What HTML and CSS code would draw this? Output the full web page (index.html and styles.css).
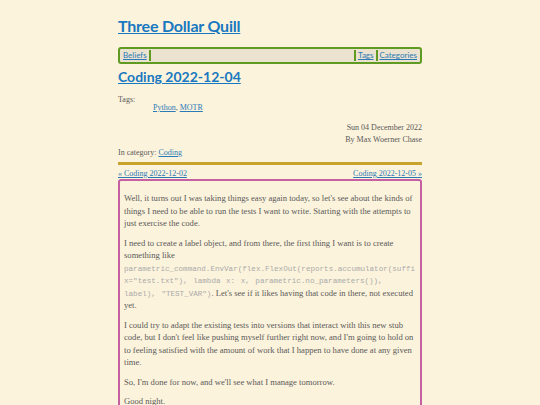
FILE: index.html
```html
<!DOCTYPE html>
<html lang="en">
<head>
    <meta charset="UTF-8">
    <meta name="viewport" content="width=device-width, initial-scale=1.0">
    <title>Coding 2022-12-04 - Three Dollar Quill</title>
    <link rel="stylesheet" href="styles.css">
</head>
<body>
    <div class="page">
        <header>
            <h1 class="site-title"><a href="#">Three Dollar Quill</a></h1>
            <nav class="menu">
                <a href="#">Beliefs</a>
                <span class="spacer"></span>
                <a href="#">Tags</a>
                <a href="#">Categories</a>
            </nav>
        </header>

        <article>
            <h2 class="post-title"><a href="#">Coding 2022-12-04</a></h2>

            <div class="tags">
                <div>Tags:</div>
                <div class="tag-list"><a href="#">Python</a>, <a href="#">MOTR</a></div>
            </div>

            <div class="byline">
                <div>Sun 04 December 2022</div>
                <div>By Max Woerner Chase</div>
            </div>

            <div class="category">In category: <a href="#">Coding</a></div>

            <div class="pager">
                <a href="#">&laquo; Coding 2022-12-02</a>
                <a href="#">Coding 2022-12-05 &raquo;</a>
            </div>

            <div class="entry">
                <p>Well, it turns out I was taking things easy again today, so let's see about the kinds of things I need to be able to run the tests I want to write. Starting with the attempts to just exercise the code.</p>
                <p>I need to create a label object, and from there, the first thing I want is to create something like <code>parametric_command.EnvVar(flex.FlexOut(reports.accumulator(suffix="test.txt"), lambda x: x, parametric.no_parameters()), label), "TEST_VAR")</code>. Let's see if it likes having that code in there, not executed yet.</p>
                <p>I could try to adapt the existing tests into versions that interact with this new stub code, but I don't feel like pushing myself further right now, and I'm going to hold on to feeling satisfied with the amount of work that I happen to have done at any given time.</p>
                <p>So, I'm done for now, and we'll see what I manage tomorrow.</p>
                <p>Good night.</p>
            </div>
        </article>
    </div>
</body>
</html>
```

FILE: styles.css
```css
body {
    margin: 0;
    background-color: #fcf3dc;
    color: #5a5a5a;
    font-family: 'Liberation Serif', serif;
    font-size: 8px;
}
a {
    color: #2a7ab8;
}
.page {
    width: 304px;
    margin: 0 auto;
    padding-top: 14px;
}
.site-title {
    font-family: 'Lato', 'Open Sans', sans-serif;
    font-size: 16px;
    letter-spacing: -0.2px;
    font-weight: bold;
    margin: 0 0 9px 0;
    line-height: 24px;
}
.site-title a {
    color: #1878c0;
}
.menu {
    display: flex;
    align-items: center;
    height: 11px;
    padding: 1px 1px;
    border: 2px solid #5f9a22;
    border-radius: 3px;
    background-color: #ebe3cf;
    font-family: 'Lato', 'Open Sans', sans-serif;
    font-size: 8px;
}
.menu a {
    padding: 0 2px;
    line-height: 11px;
}
.menu a:first-child {
    border-right: 2px solid #5f9a22;
}
.menu .spacer + a,
.menu a:last-child {
    border-left: 2px solid #5f9a22;
}
.spacer {
    flex: 1;
}
.post-title {
    font-family: 'Lato', 'Open Sans', sans-serif;
    font-size: 14px;
    font-weight: bold;
    margin: 4px 0 11px 0;
}
.post-title a {
    color: #1878c0;
}
.tags {
    line-height: 8px;
}
.tag-list {
    padding-left: 35px;
}
.byline {
    text-align: right;
    margin-top: 10px;
    line-height: 12px;
}
.category {
    margin-top: 1px;
    line-height: 12px;
}
.pager {
    display: flex;
    justify-content: space-between;
    border-top: 3px solid #c8a42e;
    margin-top: 3px;
    padding-top: 5px;
    line-height: 8px;
}
.entry {
    margin-top: 1px;
    border: 2px solid #c561a3;
    border-radius: 3px;
    padding: 4px 4px 3px;
    font-size: 8.6px;
    line-height: 12.5px;
}
.entry p {
    margin: 7px 0;
}
code {
    font-family: 'Liberation Mono', monospace;
    font-size: 7.58px;
    line-height: 1;
    word-spacing: 1px;
    color: #aaa;
    overflow-wrap: break-word;
}
```
